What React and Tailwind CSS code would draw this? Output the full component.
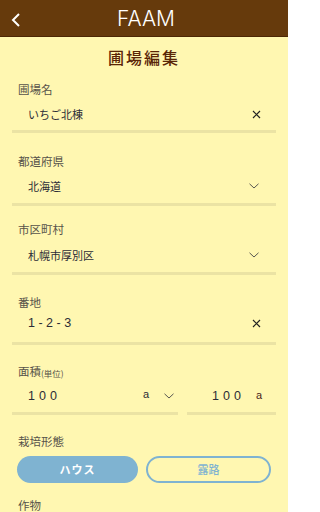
import React from "react";

const XIcon = () => (
  <svg width="9" height="9" viewBox="0 0 9 9" className="block">
    <path d="M1 1 L8 8 M8 1 L1 8" stroke="#222" strokeWidth="1.2" fill="none" />
  </svg>
);

const Chevron = () => (
  <svg width="10" height="6" viewBox="0 0 10 6" className="block">
    <path d="M0.5 0.8 L5 5 L9.5 0.8" stroke="#444" strokeWidth="0.9" fill="none" />
  </svg>
);

const num = { fontFamily: '"Liberation Sans", Arial, sans-serif' };

export default function App() {
  const jp = { fontFamily: '"Noto Sans CJK JP", "Noto Sans", sans-serif' };
  return (
    <div className="w-[288px] h-[512px] overflow-hidden bg-[#fff7b1]" style={jp}>
      <header className="h-[37px] bg-[#663a0c] border-b border-[#4d2705] flex items-center relative">
        <svg width="10" height="14" viewBox="0 0 10 14" className="absolute left-[11px] top-[13px]">
          <path d="M8 1 L2 7 L8 13" stroke="#fff" strokeWidth="2" fill="none" />
        </svg>
        <div
          className="flex-1 text-center text-white text-[21px] leading-none pl-[4px]"
          style={{ fontFamily: 'Inter, sans-serif', fontWeight: 300 }}
        >
          FAAM
        </div>
      </header>

      <div className="h-[40px] flex items-center justify-center text-[16px] tracking-[2px] text-[#5a2506] font-medium">
        圃場編集
      </div>

      <div className="px-3">
        {/* 圃場名 */}
        <div className="mt-[5px] h-[16px] flex items-center pl-[6px] text-[11.5px] text-[#57534a]">圃場名</div>
        <div className="mt-[6px] h-[20px] flex items-center pl-[16px] pr-[15px] text-[11px] text-[#2c2c36]">
          <span className="flex-1">いちご北棟</span>
          <XIcon />
        </div>
        <div className="mt-[6px] h-[3px] bg-[#ebe3a4]" />

        {/* 都道府県 */}
        <div className="mt-[21px] h-[16px] flex items-center pl-[6px] text-[11.5px] text-[#57534a]">都道府県</div>
        <div className="mt-[6px] h-[20px] flex items-center pl-[16px] pr-[17px] text-[11px] text-[#2c2c36]">
          <span className="flex-1">北海道</span>
          <Chevron />
        </div>
        <div className="mt-[7px] h-[3px] bg-[#ebe3a4]" />

        {/* 市区町村 */}
        <div className="mt-[16px] h-[16px] flex items-center pl-[6px] text-[11.5px] text-[#57534a]">市区町村</div>
        <div className="mt-[7px] h-[20px] flex items-center pl-[16px] pr-[17px] text-[11px] text-[#2c2c36]">
          <span className="flex-1">札幌市厚別区</span>
          <Chevron />
        </div>
        <div className="mt-[7px] h-[3px] bg-[#ebe3a4]" />

        {/* 番地 */}
        <div className="mt-[20px] h-[16px] flex items-center pl-[6px] text-[11.5px] text-[#57534a]">番地</div>
        <div className="mt-[2px] h-[20px] flex items-center pl-[16px] pr-[15px] text-[12.5px] text-[#2c2c36]">
          <span className="flex-1 tracking-[3.5px]" style={num}>1-2-3</span>
          <XIcon />
        </div>
        <div className="mt-[9px] h-[3px] bg-[#ebe3a4]" />

        {/* 面積 */}
        <div className="mt-[19px] h-[16px] flex items-end pl-[6px] text-[11.5px] text-[#57534a]">
          面積<span className="text-[8.5px] leading-[14px]">(単位)</span>
        </div>
        <div className="flex gap-[9px]">
          <div className="w-[166px]">
            <div className="mt-[6px] h-[20px] flex items-center pl-[16px] pr-[4px] text-[12.5px] text-[#2c2c36]">
              <span className="flex-1 tracking-[4px]" style={num}>100</span>
              <span className="text-[11px] mr-[15px] -mt-[4px]" style={num}>a</span>
              <Chevron />
            </div>
            <div className="mt-[6px] h-[3px] bg-[#ebe3a4]" />
          </div>
          <div className="flex-1">
            <div className="mt-[6px] h-[20px] flex items-center justify-end pr-[14px] text-[12.5px] text-[#2c2c36]">
              <span className="tracking-[4px] mr-[11px]" style={num}>100</span>
              <span className="text-[11px] text-[#4a1c1c] -mt-[1px]" style={num}>a</span>
            </div>
            <div className="mt-[6px] h-[3px] bg-[#ebe3a4]" />
          </div>
        </div>

        {/* 栽培形態 */}
        <div className="mt-[19px] h-[16px] flex items-center pl-[6px] text-[11.5px] text-[#57534a]">栽培形態</div>
        <div className="mt-[6px] flex gap-[8px] px-[5px]">
          <div className="flex-1 h-[27px] rounded-full bg-[#7fb3d1] flex items-center justify-center text-white text-[11px] font-bold tracking-[1px]">
            ハウス
          </div>
          <div className="flex-1 h-[27px] rounded-full border-2 border-[#7fb3d1] flex items-center justify-center text-[#7fb3d1] text-[11px] font-medium">
            露路
          </div>
        </div>

        {/* 作物 */}
        <div className="mt-[15px] h-[16px] flex items-center pl-[6px] text-[11.5px] text-[#57534a]">作物</div>
      </div>
    </div>
  );
}
